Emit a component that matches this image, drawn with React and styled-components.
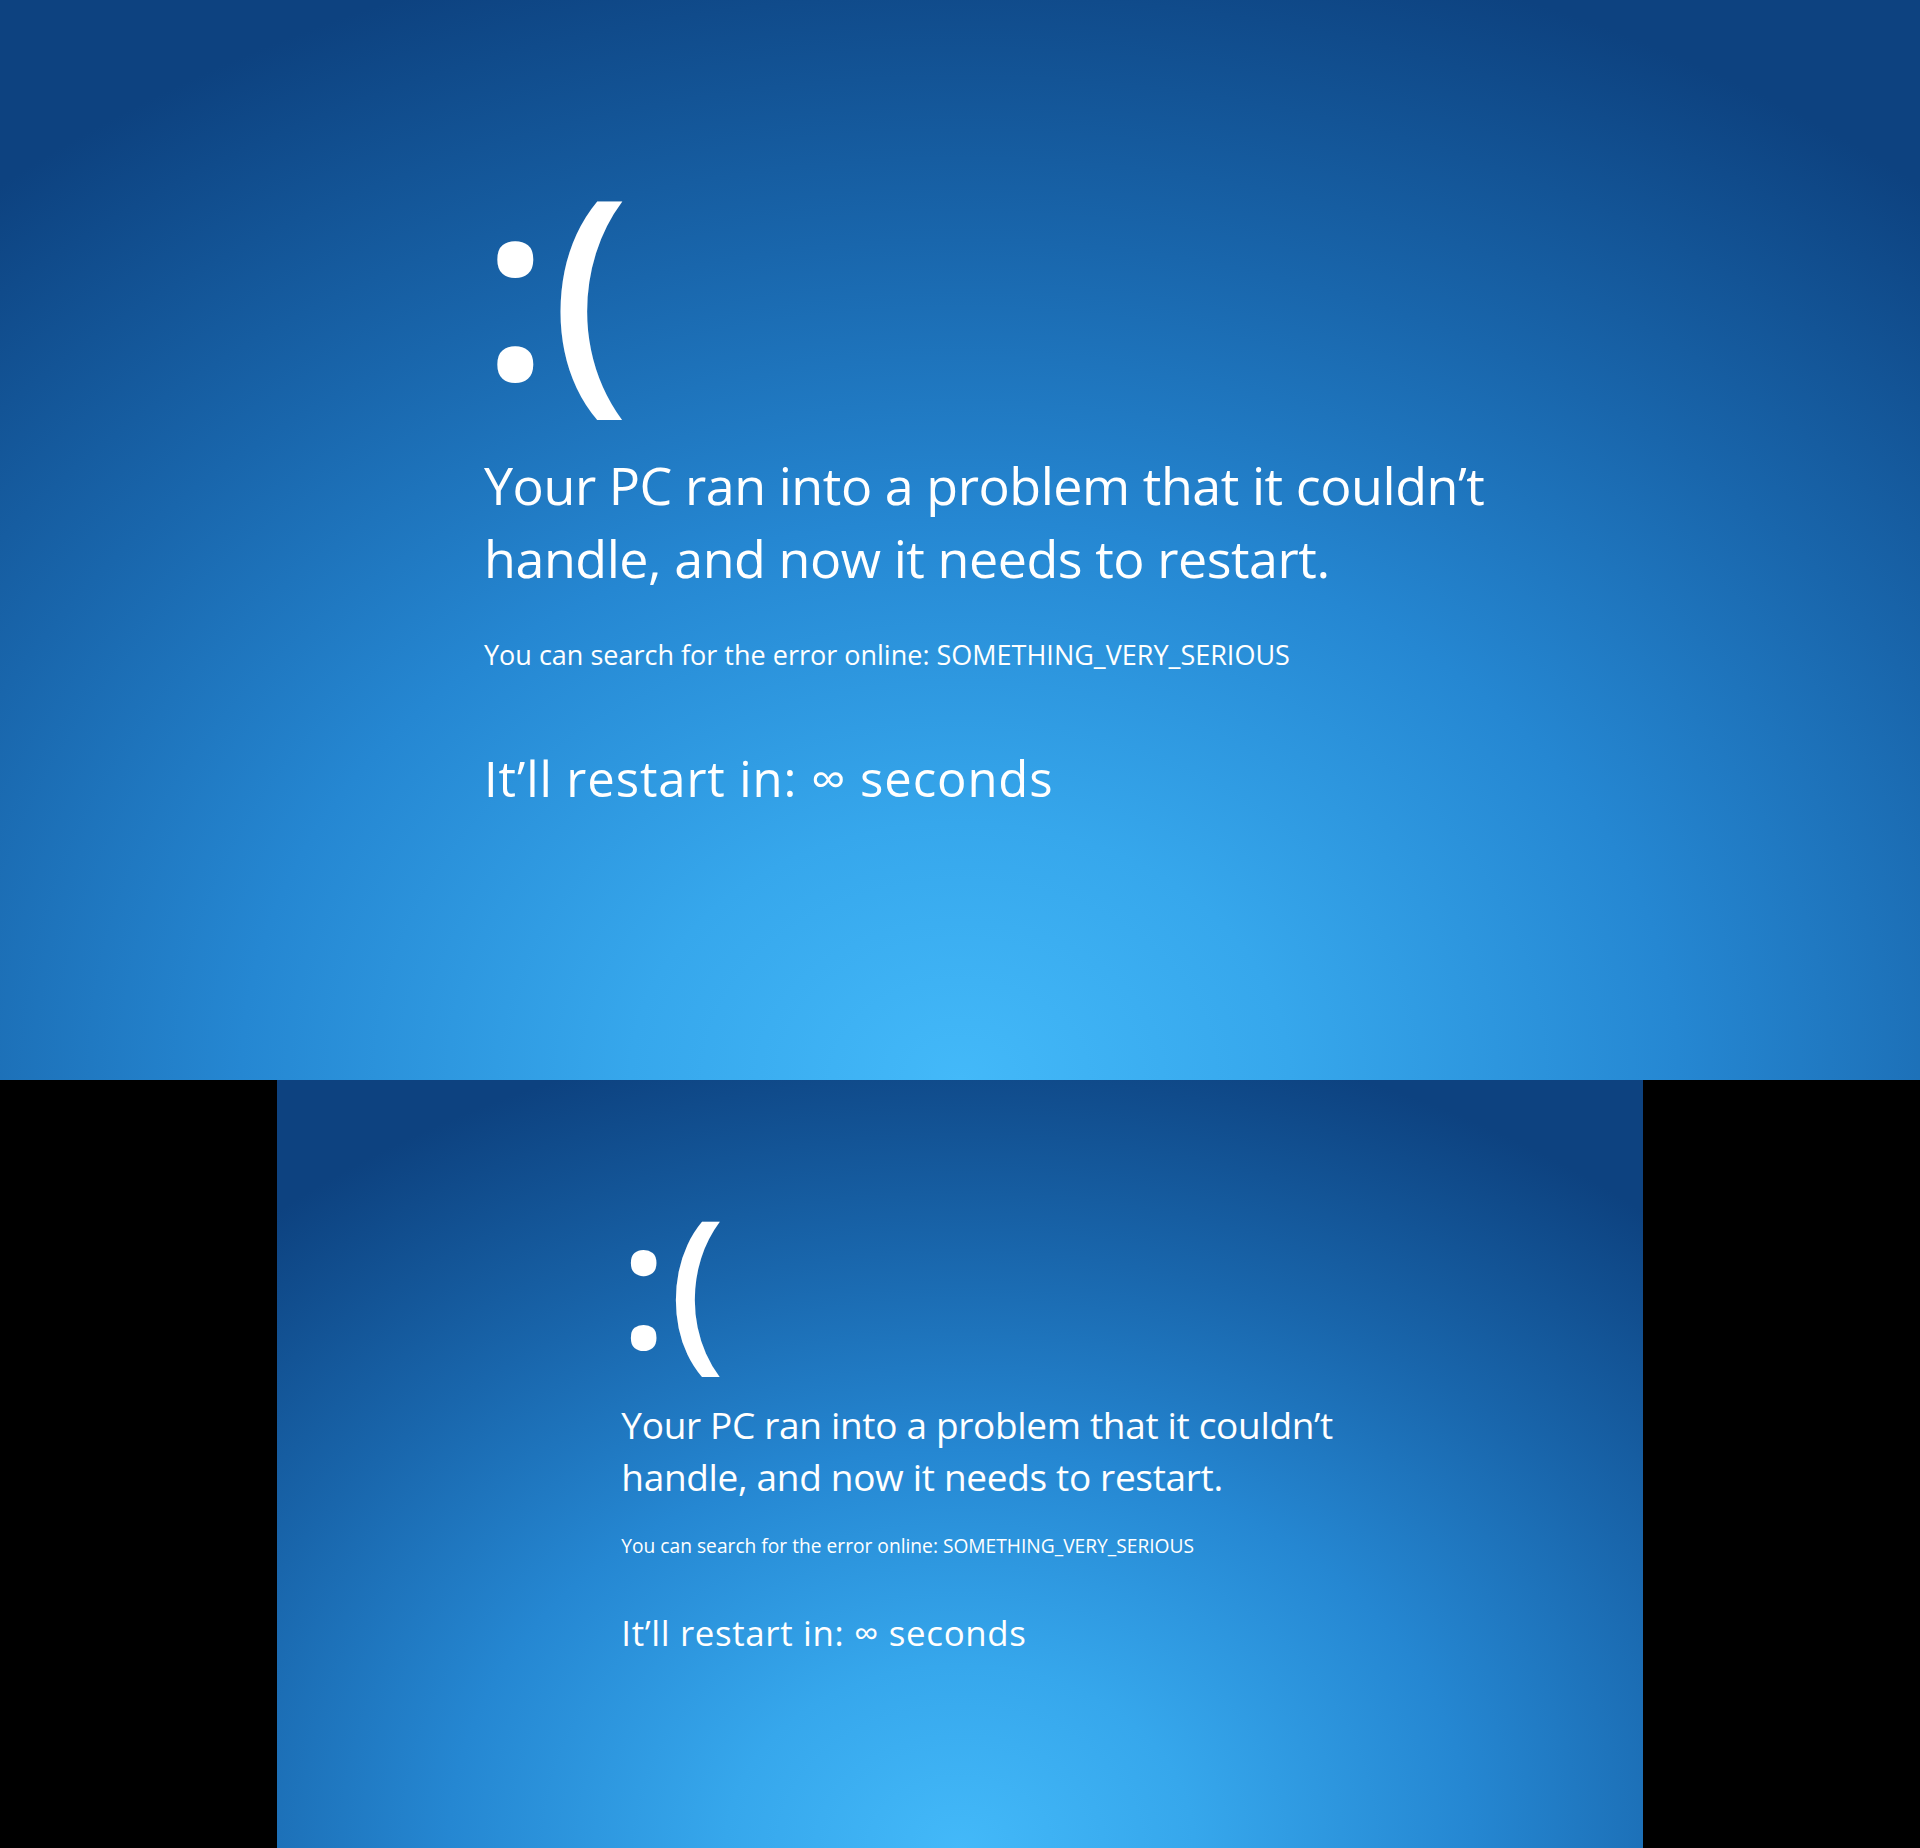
import styled, { createGlobalStyle } from "styled-components";

const GlobalStyle = createGlobalStyle`
  html, body {
    margin: 0;
    padding: 0;
    background: #000;
  }
`;

const Page = styled.div`
  display: flex;
  flex-direction: column;
  width: 1920px;
  background: #000;
`;

const Letterbox = styled.div`
  display: flex;
  justify-content: center;
  background: #000;
`;

// every size below is the 1920x1080 size, multiplied by --s
const Screen = styled.div`
  --s: ${(p) => p.$scale};
  box-sizing: border-box;
  width: calc(1920px * var(--s));
  height: calc(1080px * var(--s));
  display: flex;
  flex-direction: column;
  align-items: flex-start;
  padding: calc(158px * var(--s)) 0 0 calc(484px * var(--s));
  overflow: hidden;
  color: #fff;
  font-family: "Open Sans", "Noto Sans", sans-serif;
  background: radial-gradient(
    ellipse 78% 108% at 50% 100%,
    #43b9f9 0%,
    #36a7ec 22%,
    #2587d2 48%,
    #1966ac 72%,
    #0d4280 100%
  );
`;

const Face = styled.div`
  font-size: calc(250px * var(--s));
  font-weight: 600;
  line-height: 1;
  margin-left: calc(-3px * var(--s));
  letter-spacing: calc(1px * var(--s));
`;

const Headline = styled.div`
  font-size: calc(52px * var(--s));
  line-height: calc(73px * var(--s));
  letter-spacing: calc(-0.45px * var(--s));
  margin-top: calc(40px * var(--s));
  white-space: nowrap;
`;

const Detail = styled.div`
  font-size: calc(27px * var(--s));
  line-height: calc(30px * var(--s));
  margin-top: calc(46px * var(--s));
  white-space: nowrap;
`;

const Countdown = styled.div`
  font-size: calc(49px * var(--s));
  line-height: calc(54px * var(--s));
  letter-spacing: calc(0.9px * var(--s));
  margin-top: calc(81px * var(--s));
  white-space: nowrap;
`;

function BlueScreen({ scale }) {
  return (
    <Screen $scale={scale}>
      <Face>:(</Face>
      <Headline>
        Your PC ran into a problem that it couldn’t
        <br />
        handle, and now it needs to restart.
      </Headline>
      <Detail>You can search for the error online: SOMETHING_VERY_SERIOUS</Detail>
      <Countdown>It’ll restart in: ∞ seconds</Countdown>
    </Screen>
  );
}

export default function App() {
  return (
    <Page>
      <GlobalStyle />
      <BlueScreen scale={1} />
      <Letterbox>
        <BlueScreen scale={1366 / 1920} />
      </Letterbox>
    </Page>
  );
}
